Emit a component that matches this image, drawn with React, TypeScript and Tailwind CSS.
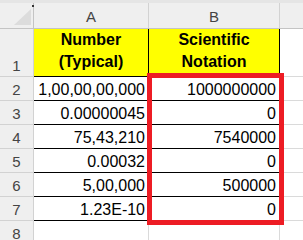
import React from "react";

const rows = [
  { n: 2, a: "1,00,00,00,000", b: "1000000000" },
  { n: 3, a: "0.00000045", b: "0" },
  { n: 4, a: "75,43,210", b: "7540000" },
  { n: 5, a: "0.00032", b: "0" },
  { n: 6, a: "5,00,000", b: "500000" },
  { n: 7, a: "1.23E-10", b: "0" },
];

const RowHead: React.FC<{ n: number }> = ({ n }) => (
  <div className="w-[34px] shrink-0 flex items-end justify-center bg-[#efefef] border-r border-b border-[#d2d2d2] text-[15px] leading-[20px] text-[#444]">
    {n}
  </div>
);

const App: React.FC = () => {
  return (
    <div className="relative w-[303px] h-[240px] overflow-hidden bg-white font-['Liberation_Sans',sans-serif] text-black">
      {/* franja superior */}
      <div className="h-[3px] bg-[#e5e5e5]" />

      {/* cabecera de columnas */}
      <div className="flex h-[26px] bg-[#efefef] border-b border-[#c4c4c4]">
        <div className="relative w-[34px] shrink-0 border-r border-[#c4c4c4]">
          <svg className="absolute left-0 top-0" width="33" height="25" viewBox="0 0 33 25">
            <polygon points="14,22 31,22 31,6" fill="#dcdcdc" />
          </svg>
          <div className="absolute right-[-1px] top-[2px] w-[2px] h-[2px] bg-[#333]" />
        </div>
        <div className="w-[115px] shrink-0 flex items-end justify-center pb-[1px] border-r border-[#d2d2d2] text-[15px] leading-[20px] text-[#444]">
          A
        </div>
        <div className="w-[131px] shrink-0 flex items-end justify-center pb-[1px] border-r border-[#d2d2d2] text-[15px] leading-[20px] text-[#444]">
          B
        </div>
        <div className="flex-1" />
      </div>

      {/* fila 1 */}
      <div className="flex h-[48px]">
        <RowHead n={1} />
        <div className="w-[115px] shrink-0 flex flex-col items-center justify-end pb-[3px] bg-[#ffff00] border-r border-b border-black text-[16px] leading-[22px] font-bold">
          <span>Number</span>
          <span>(Typical)</span>
        </div>
        <div className="w-[131px] shrink-0 flex flex-col items-center justify-end pb-[3px] bg-[#ffff00] border-r border-b border-black text-[16px] leading-[22px] font-bold">
          <span>Scientific</span>
          <span>Notation</span>
        </div>
        <div className="flex-1 border-b border-[#dadada]" />
      </div>

      {rows.map((r) => (
        <div key={r.n} className="flex h-[24px]">
          <RowHead n={r.n} />
          <div className="w-[115px] shrink-0 flex items-end justify-end px-[3px] border-r border-b border-black text-[16px] leading-[20px]">
            {r.a}
          </div>
          <div className="w-[131px] shrink-0 flex items-end justify-end px-[3px] border-r border-b border-black text-[16px] leading-[20px]">
            {r.b}
          </div>
          <div className="flex-1 border-b border-[#dadada]" />
        </div>
      ))}

      {/* fila 8 */}
      <div className="flex h-[24px]">
        <RowHead n={8} />
        <div className="w-[115px] shrink-0 border-r border-b border-[#dadada]" />
        <div className="w-[131px] shrink-0 border-r border-b border-[#dadada]" />
        <div className="flex-1 border-b border-[#dadada]" />
      </div>

      {/* recuadro rojo */}
      <div className="absolute left-[147px] top-[73px] w-[137px] h-[152px] border-[5px] border-[#ed1c24]" />
    </div>
  );
};

export default App;
